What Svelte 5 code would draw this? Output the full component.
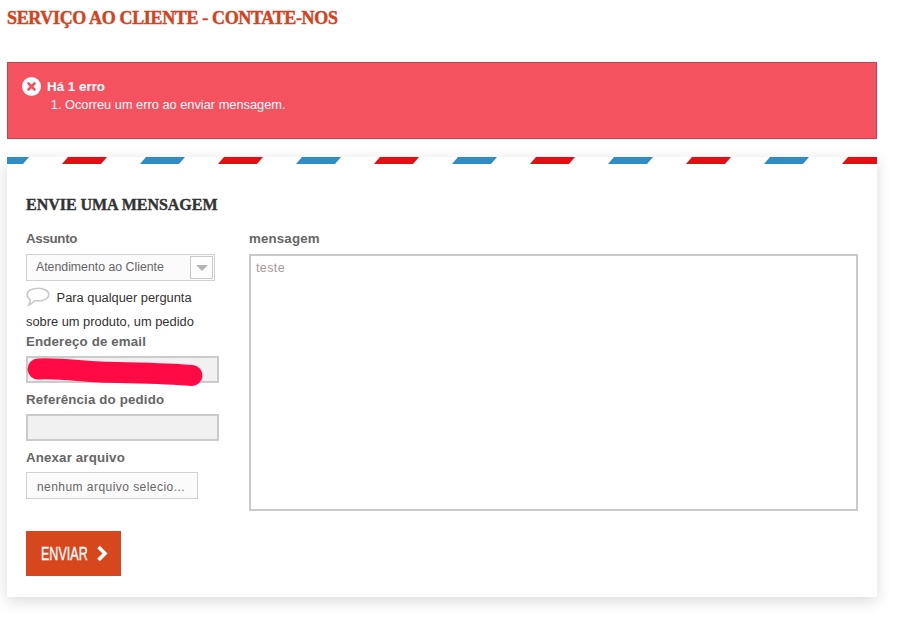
<script>
  const stripes = [-16, 62, 140, 218, 296, 374, 452, 530, 608, 686, 764, 842];
  function points(x) {
    return `${x},7 ${x + 6},0 ${x + 45},0 ${x + 39},7`;
  }
  function stripeColor(i) {
    return i % 2 === 0 ? '#2f8cc5' : '#e30f13';
  }
</script>

<div class="page">
  <h1 class="title">SERVIÇO AO CLIENTE - CONTATE-NOS</h1>

  <div class="alert">
    <div class="alert-head">
      <svg class="err" viewBox="0 0 19 19" width="19" height="19" aria-hidden="true">
        <circle cx="9.5" cy="9.5" r="9.5" fill="#fff" />
        <path d="M6.5 6.500l6 6M12.5 6.500l-6 6" stroke="#f25260" stroke-width="2.600" stroke-linecap="round" />
      </svg>
      <strong>Há 1 erro</strong>
    </div>
    <ol class="errors"><li>Ocorreu um erro ao enviar mensagem.</li></ol>
  </div>

  <div class="card">
    <svg class="airmail" width="870" height="7" viewBox="0 0 870 7" aria-hidden="true">
      {#each stripes as x, i}
        <polygon points={points(x - 7)} fill={stripeColor(i)} />
      {/each}
    </svg>
    <div class="body">
      <h2>ENVIE UMA MENSAGEM</h2>
      <div class="columns">
        <div class="left">
          <label class="first subject" for="subject">Assunto</label>
          <div class="select" id="subject">
            <span class="select-text">Atendimento ao Cliente</span>
            <span class="arrow"><i></i></span>
          </div>
          <p class="hint">
            <svg class="bubble" width="24" height="20" viewBox="0 0 24 20" aria-hidden="true">
              <path d="M12 1.200c6 0 10.800 2.800 10.800 6.400S18 14 12 14c-1.300 0-2.500-.1-3.600-.4C7 15.500 5 17.300 2.800 18c1-1.500 1.500-3 1.500-5.200C2.300 11.600 1.200 9.700 1.200 7.600 1.200 4 6 1.200 12 1.200z" fill="#fff" stroke="#c9c9c9" stroke-width="1.600" />
            </svg>
            <span class="l1">Para qualquer pergunta</span><br />
            <span>sobre um produto, um pedido</span>
          </p>
          <label for="email">Endereço de email</label>
          <div class="field-wrap">
            <div class="field" id="email"></div>
            <svg class="scribble" width="193" height="27" viewBox="0 0 193 27" aria-hidden="true">
              <path d="M12 13C34 12 52 15 74 16c32 1 66 1 92 3.500" fill="none" stroke="#ff0a45" stroke-width="21" stroke-linecap="round" />
            </svg>
          </div>
          <label for="ref">Referência do pedido</label>
          <div class="field" id="ref"></div>
          <label for="file">Anexar arquivo</label>
          <div class="file" id="file">nenhum arquivo selecio...</div>
        </div>
        <div class="right">
          <label class="first" for="msg">mensagem</label>
          <div class="textarea" id="msg">teste</div>
        </div>
      </div>
      <button class="send" type="button">
        <span class="send-label"><span>ENVIAR</span></span>
        <svg width="12" height="17" viewBox="0 0 12 17" aria-hidden="true">
          <path d="M2.500 2l6.500 6.500L2.500 15" fill="none" stroke="#fff" stroke-width="3.600" />
        </svg>
      </button>
    </div>
  </div>
</div>

<style>
  :global(body) {
    margin: 0;
    background: #fff;
  }
  .page {
    width: 870px;
    padding: 8px 0 23px 7px;
    font-family: "Liberation Sans", Arial, sans-serif;
    font-size: 12.8px;
  }
  .title {
    margin: 0 0 33px;
    height: 21px;
    line-height: 21px;
    font-family: "Liberation Serif", serif;
    font-weight: 700;
    font-size: 18px;
    letter-spacing: -0.35px;
    -webkit-text-stroke: 0.45px #d2431f;
    color: #d2431f;
    white-space: nowrap;
  }
  .alert {
    box-sizing: border-box;
    height: 77px;
    padding: 14px 14px;
    background: #f5525f;
    border: 1px solid #c9404c;
    color: #fff;
    line-height: 18px;
  }
  .alert-head {
    display: flex;
    align-items: center;
    gap: 6px;
    height: 19px;
  }
  .alert-head strong {
    font-size: 13.400px;
  }
  .errors {
    margin: 0;
    padding: 0 0 0 43px;
    font-size: 12.800px;
  }
  .err {
    flex: none;
  }
  .card {
    margin-top: 18px;
    width: 870px;
    height: 440px;
    background: #fff;
    box-shadow: 0 4px 14px rgba(0, 0, 0, 0.15), inset 0 0 14px rgba(0, 0, 0, 0.012);
  }
  .airmail {
    display: block;
  }
  .body {
    padding: 30px 19px 0;
  }
  h2 {
    margin: 0;
    height: 21px;
    line-height: 21px;
    font-family: "Liberation Serif", serif;
    font-weight: 700;
    font-size: 16px;
    letter-spacing: -0.03px;
    -webkit-text-stroke: 0.4px #333;
    color: #333;
    white-space: nowrap;
  }
  .columns {
    display: flex;
    gap: 30px;
    margin-top: 16px;
  }
  .left {
    width: 193px;
    flex: none;
  }
  .right {
    width: 609px;
    flex: none;
  }
  label {
    display: block;
    font-weight: 700;
    font-size: 13.300px;
    line-height: 16px;
    color: #666;
    margin-top: 9px;
    letter-spacing: 0.15px;
    white-space: nowrap;
  }
  label.first {
    margin-top: 0;
  }
  label.subject {
    letter-spacing: -0.3px;
  }
  .select {
    box-sizing: border-box;
    width: 189px;
    height: 27px;
    margin-top: 7px;
    border: 1px solid #d2d2d2;
    background: #fbfbfb;
    display: flex;
    align-items: center;
    justify-content: space-between;
    padding: 1px 1px 1px 9px;
    font-size: 12.300px;
    color: #666;
  }
  .select-text {
    line-height: 14px;
    padding-bottom: 2px;
  }
  .arrow {
    box-sizing: border-box;
    width: 23px;
    height: 23px;
    border: 1px solid #c9c9c9;
    display: flex;
    align-items: center;
    justify-content: center;
    background: #fdfdfd;
  }
  .arrow i {
    width: 0;
    height: 0;
    border-left: 6px solid transparent;
    border-right: 6px solid transparent;
    border-top: 6px solid #b5b5b5;
  }
  .hint {
    margin: 5px 0 0;
    font-size: 12.850px;
    line-height: 24px;
    color: #333;
    white-space: nowrap;
  }
  .bubble {
    vertical-align: top;
    margin-top: 1px;
  }
  .l1 {
    margin-left: 3px;
  }
  .hint + label {
    margin-top: 0;
  }
  .field-wrap {
    position: relative;
  }
  .field {
    box-sizing: border-box;
    width: 193px;
    height: 27px;
    margin-top: 6px;
    background: #f1f1f1;
    border: 2px solid #cbcbcb;
  }
  .scribble {
    position: absolute;
    left: 0;
    top: 0;
    overflow: visible;
  }
  .file {
    box-sizing: border-box;
    width: 172px;
    height: 27px;
    margin-top: 6px;
    border: 1px solid #d2d2d2;
    background: #fbfbfb;
    padding: 1px 0 0 10px;
    line-height: 26px;
    font-size: 12px;
    color: #666;
    letter-spacing: 0.45px;
    white-space: nowrap;
  }
  .textarea {
    box-sizing: border-box;
    width: 609px;
    height: 257px;
    margin-top: 7px;
    border: 2px solid #c9c9c9;
    padding: 4px 5px;
    font-size: 12.500px;
    letter-spacing: 0.4px;
    color: #a39a9a;
    line-height: 16px;
  }
  .send {
    display: flex;
    align-items: center;
    gap: 9px;
    box-sizing: border-box;
    width: 95px;
    height: 45px;
    margin-top: 20px;
    padding: 0 0 0 15px;
    border: 0;
    background: #d7471d;
    color: #fff;
    font-family: "Liberation Sans", sans-serif;
    font-size: 19px;
    -webkit-text-stroke: 0.35px #fff;
  }
  .send-label {
    display: block;
    flex: none;
    width: 46px;
    height: 22px;
    line-height: 22px;
    text-align: left;
  }
  .send-label span {
    display: inline-block;
    white-space: nowrap;
    transform: scaleX(0.66);
    transform-origin: left center;
  }
  .send svg {
    flex: none;
  }
</style>
